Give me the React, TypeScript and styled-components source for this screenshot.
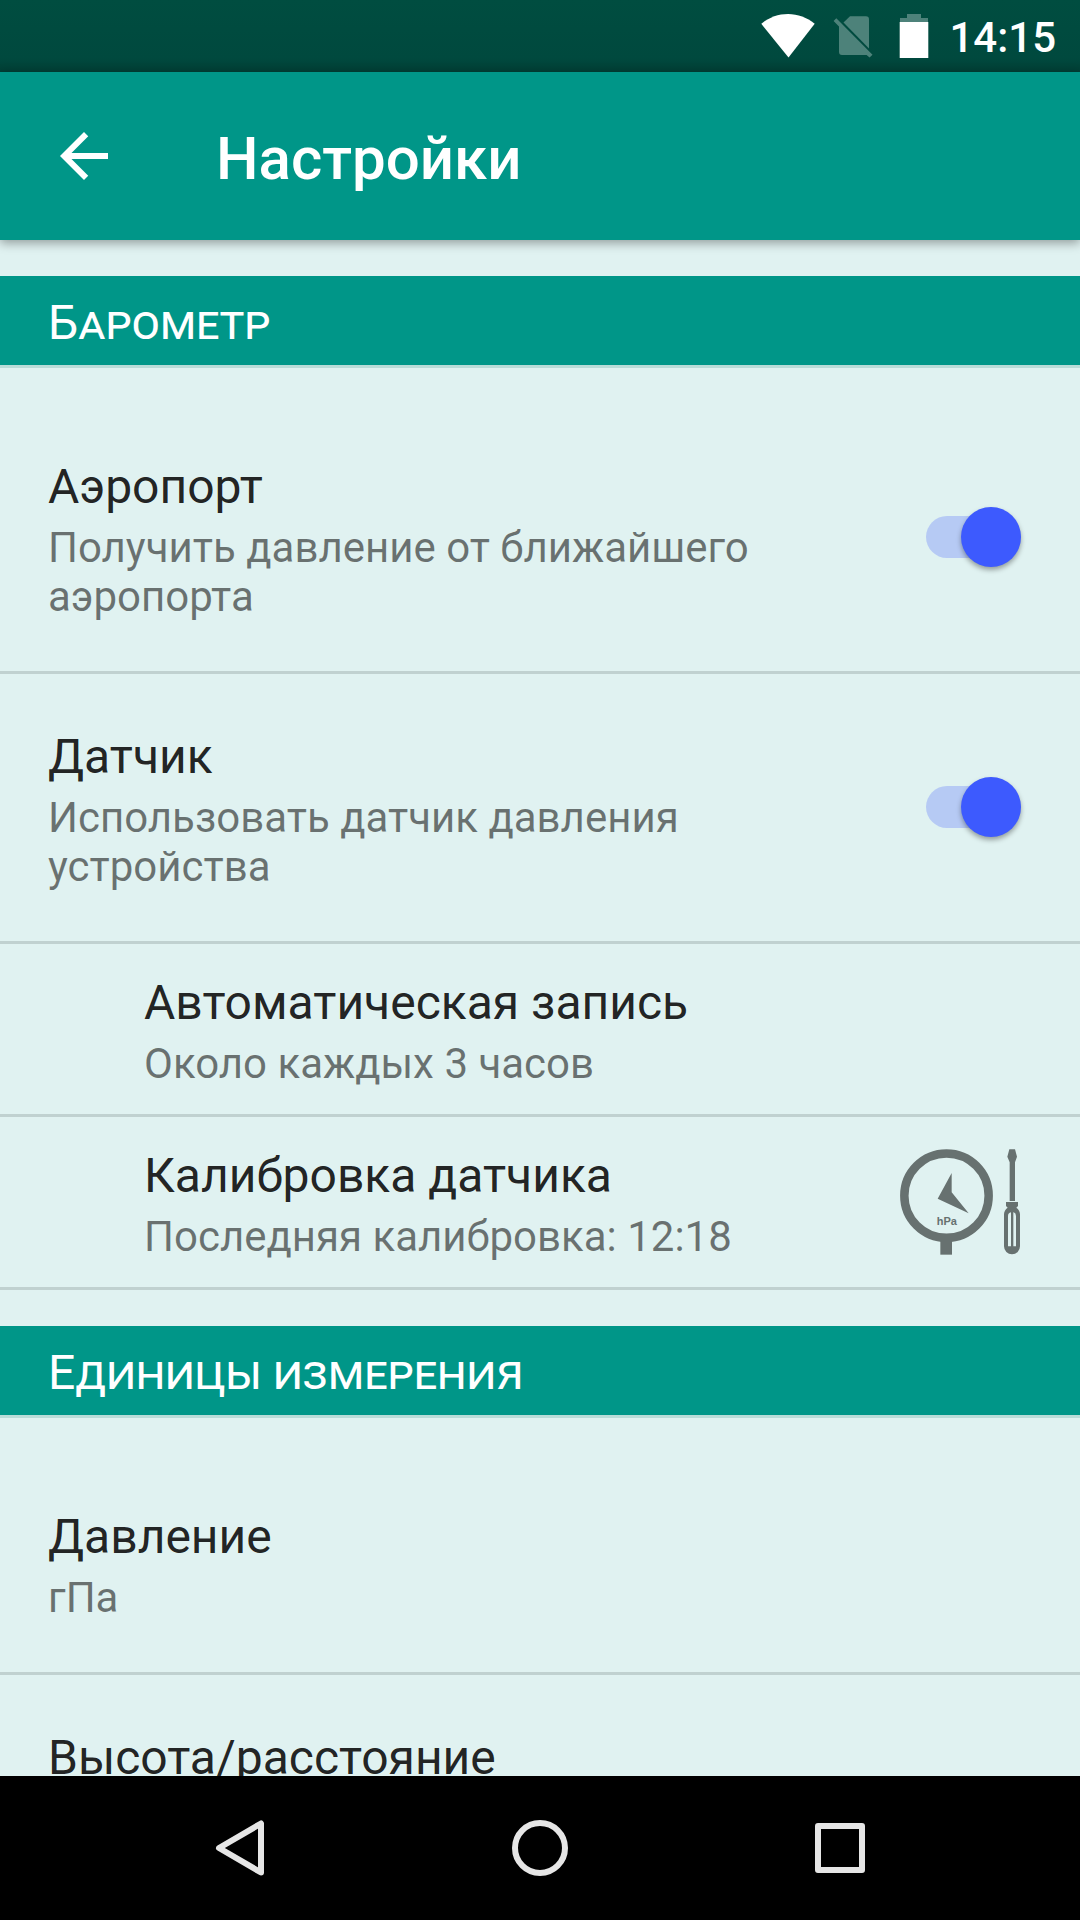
import React from "react";
import styled, { createGlobalStyle } from "styled-components";

const GlobalStyle = createGlobalStyle`
  * { box-sizing: border-box; }
  body {
    margin: 0;
    background: #000;
    font-family: Roboto, "Noto Sans", sans-serif;
  }
  svg { display: block; flex: none; }
`;

const Screen = styled.div`
  width: 1080px;
  height: 1920px;
  display: flex;
  flex-direction: column;
  overflow: hidden;
  background: #e0f2f1;
`;

const StatusBar = styled.div`
  flex: none;
  height: 72px;
  display: flex;
  align-items: flex-start;
  padding: 14px 24px 0 0;
  justify-content: flex-end;
  background: linear-gradient(#004d40 0, #00493e 58px, #003f35 72px);
`;

const StatusIcons = styled.div`
  display: flex;
  gap: 18px;
  margin-right: 26px;
`;

const Clock = styled.div`
  margin: -1px 0 0 20px;
  font-size: 42px;
  line-height: 49px;
  font-weight: 500;
  color: #fff;
`;

const Toolbar = styled.header`
  flex: none;
  z-index: 1;
  height: 168px;
  display: flex;
  align-items: center;
  gap: 96px;
  padding-left: 48px;
  background: #009688;
  box-shadow: 0 3px 10px rgba(0, 0, 0, 0.36);
`;

const ToolbarTitle = styled.h1`
  margin: 5px 0 0;
  font-size: 60px;
  line-height: 70px;
  font-weight: 500;
  color: #fff;
`;

const List = styled.main`
  flex: 1;
  min-height: 0;
  overflow: hidden;
`;

const SectionHeader = styled.h2`
  margin: 36px 0;
  height: 92px;
  padding: 19px 48px 0;
  border-bottom: 3px solid #b9dcd8;
  background: #009688;
  background-clip: padding-box;
  color: #fff;
  font-size: 48px;
  line-height: 56px;
  font-weight: 400;
  font-variant-caps: small-caps;
`;

const Row = styled.div<{ $height: number; $indent?: boolean }>`
  display: flex;
  align-items: center;
  justify-content: space-between;
  height: ${(p) => p.$height + 3}px;
  padding: 0 60px 1px ${(p) => (p.$indent ? 144 : 48)}px;
  border-bottom: 3px solid #c0d1d0;
`;

const RowText = styled.div`
  padding-top: 5px;
  max-width: 760px;
`;

const RowTitle = styled.div`
  font-size: 48px;
  line-height: 56px;
  margin-bottom: 8px;
  color: rgba(0, 0, 0, 0.87);
`;

const RowSummary = styled.div`
  min-height: 49px;
  font-size: 42px;
  line-height: 49px;
  color: rgba(0, 0, 0, 0.54);
`;

const SwitchTrack = styled.div`
  flex: none;
  display: flex;
  align-items: center;
  justify-content: flex-end;
  width: 95px;
  height: 42px;
  margin-right: -1px;
  border-radius: 21px;
  background: rgba(61, 90, 254, 0.26);
`;

const SwitchThumb = styled.div`
  width: 60px;
  height: 60px;
  border-radius: 50%;
  background: #3d5afe;
  box-shadow: 0 3px 5px rgba(0, 0, 0, 0.34);
`;

const NavBar = styled.nav`
  flex: none;
  height: 144px;
  display: flex;
  justify-content: center;
  background: #000;
`;

const NavButton = styled.div`
  width: 300px;
  display: flex;
  align-items: center;
  justify-content: center;
`;

const Switch = () => (
  <SwitchTrack role="switch" aria-checked="true">
    <SwitchThumb />
  </SwitchTrack>
);

type ItemProps = {
  title: string;
  summary?: React.ReactNode;
  height: number;
  indent?: boolean;
  children?: React.ReactNode;
};

const Item = ({ title, summary, height, indent, children }: ItemProps) => (
  <Row $height={height} $indent={indent}>
    <RowText>
      <RowTitle>{title}</RowTitle>
      <RowSummary>{summary}</RowSummary>
    </RowText>
    {children}
  </Row>
);

const WifiIcon = () => (
  <svg width="54" height="44" viewBox="0 0 54 44" fill="#fff">
    <path d="M0.3 9.8C8 3.4 17.200 0 27 0s19 3.400 26.700 9.800L27.500 43.500z" />
  </svg>
);

const NoSimIcon = () => (
  <svg width="40" height="44" viewBox="0 0 40 44" fill="#4d827a">
    <path d="M10.500 8.500 17 2.200H33a3 3 0 0 1 3 3V34.500z" />
    <path d="M3.300 4.300 0.600 7l5.400 5.400V38a3 3 0 0 0 3 3H33.600L36.600 43.600 39.500 40.800z" />
  </svg>
);

const BatteryIcon = () => (
  <svg width="30" height="44" viewBox="0 0 30 44">
    <path fill="#4d827a" d="M8 0h14v4h7v4H1V4h7z" />
    <path fill="#fff" d="M0.700 8h28.600v36H0.700z" />
  </svg>
);

const BackArrow = () => (
  <svg width="72" height="72" viewBox="0 0 24 24" fill="#fff">
    <path d="M20 11H7.830l5.590-5.590L12 4l-8 8 8 8 1.410-1.410L7.830 13H20v-2z" />
  </svg>
);

const CalibrationIcon = () => (
  <svg width="120" height="107" viewBox="60 54 360 321" fill="#677170">
    <circle cx="199.500" cy="197" r="126.500" fill="none" stroke="#677170" strokeWidth="25.500" />
    <path d="M181 330h35v44h-35z" />
    <path d="M215 129V187L266 250 173 206z" />
    <text x="200.500" y="286" textAnchor="middle" fontFamily="Liberation Sans, sans-serif" fontWeight="700" fontSize="33">
      hPa
    </text>
    <path d="M388 58h17l6 22-6 17v116h-16V97l-7-17z" />
    <path
      fillRule="evenodd"
      d="M378 216h36v12l-5 5c7 5 11 12 11 20v96a24 24 0 0 1-48 0v-96c0-8 4-15 11-20l-5-5z
         M393 247q-9 2-9 11v91h9z M400 247h1q7 2 7 11v91h-8z"
    />
  </svg>
);

export default function App() {
  return (
    <Screen>
      <GlobalStyle />
      <StatusBar>
        <StatusIcons>
          <WifiIcon />
          <NoSimIcon />
        </StatusIcons>
        <BatteryIcon />
        <Clock>14:15</Clock>
      </StatusBar>
      <Toolbar>
        <BackArrow />
        <ToolbarTitle>Настройки</ToolbarTitle>
      </Toolbar>
      <List>
        <SectionHeader>Барометр</SectionHeader>
        <Item
          title="Аэропорт"
          summary={<>Получить давление от ближайшего<br />аэропорта</>}
          height={267}
        >
          <Switch />
        </Item>
        <Item
          title="Датчик"
          summary={<>Использовать датчик давления<br />устройства</>}
          height={267}
        >
          <Switch />
        </Item>
        <Item title="Автоматическая запись" summary="Около каждых 3 часов" height={170} indent />
        <Item title="Калибровка датчика" summary="Последняя калибровка: 12:18" height={170} indent>
          <CalibrationIcon />
        </Item>
        <SectionHeader>Единицы измерения</SectionHeader>
        <Item title="Давление" summary="гПа" height={218} />
        <Item title="Высота/расстояние" height={218} />
      </List>
      <NavBar>
        <NavButton>
          <svg width="50" height="56" viewBox="0 0 50 56" fill="none" stroke="#e6e6e6" strokeWidth="6" strokeLinejoin="round">
            <path d="M46 3.500V52.500L4 28z" />
          </svg>
        </NavButton>
        <NavButton>
          <svg width="56" height="56" viewBox="0 0 56 56" fill="none" stroke="#e6e6e6" strokeWidth="6">
            <circle cx="28" cy="28" r="25" />
          </svg>
        </NavButton>
        <NavButton>
          <svg width="50" height="50" viewBox="0 0 50 50" fill="none" stroke="#e6e6e6" strokeWidth="6" strokeLinejoin="round">
            <path d="M3 3h44v44H3z" />
          </svg>
        </NavButton>
      </NavBar>
    </Screen>
  );
}
